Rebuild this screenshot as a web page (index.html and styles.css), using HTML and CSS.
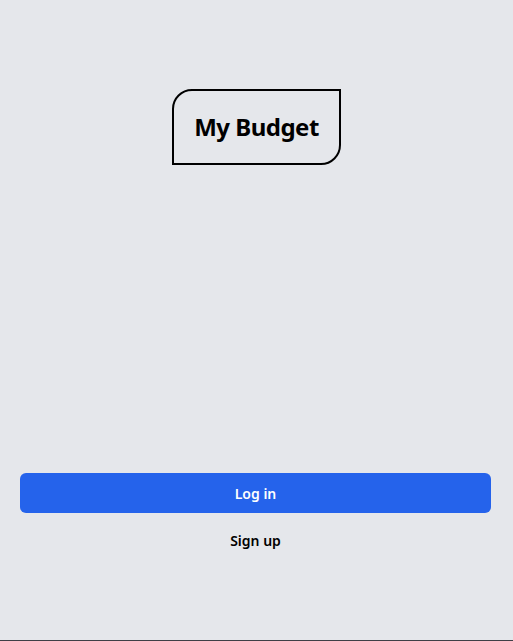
FILE: index.html
```html
<!DOCTYPE html>
<html lang="en">
<head>
<meta charset="utf-8">
<title>My Budget</title>
<link rel="stylesheet" href="styles.css">
</head>
<body>
<main class="page">
  <header class="header">
    <h1 class="logo">My Budget</h1>
  </header>
  <div class="actions">
    <button class="btn-primary" type="button">Log in</button>
    <a class="link-signup" href="#">Sign up</a>
  </div>
</main>
</body>
</html>
```
FILE: styles.css
```css
html, body {
  margin: 0;
  padding: 0;
  background: #e5e7eb;
}
body {
  font-family: "Noto Sans", "Open Sans", sans-serif;
  color: #000;
}
.page {
  height: 640px;
  border-bottom: 1px solid #3f3f46;
  display: flex;
  flex-direction: column;
}
.header {
  padding-top: 89px;
  display: flex;
  justify-content: center;
}
.logo {
  margin: 0;
  padding: 20px 20px 21px;
  border: 2px solid #000;
  border-radius: 20px 0 20px 0;
  font-size: 24px;
  line-height: 31px;
  font-weight: 700;
  letter-spacing: -0.5px;
}
.actions {
  margin-top: auto;
  padding: 0 22px 89px 20px;
  display: flex;
  flex-direction: column;
  align-items: center;
}
.btn-primary {
  width: 100%;
  height: 40px;
  border: none;
  border-radius: 6px;
  background: #2563eb;
  color: #fff;
  font-family: inherit;
  font-size: 14px;
  font-weight: 600;
  cursor: pointer;
}
.link-signup {
  margin-top: 18px;
  font-size: 14px;
  line-height: 20px;
  font-weight: 600;
  color: #000;
  text-decoration: none;
}
```
